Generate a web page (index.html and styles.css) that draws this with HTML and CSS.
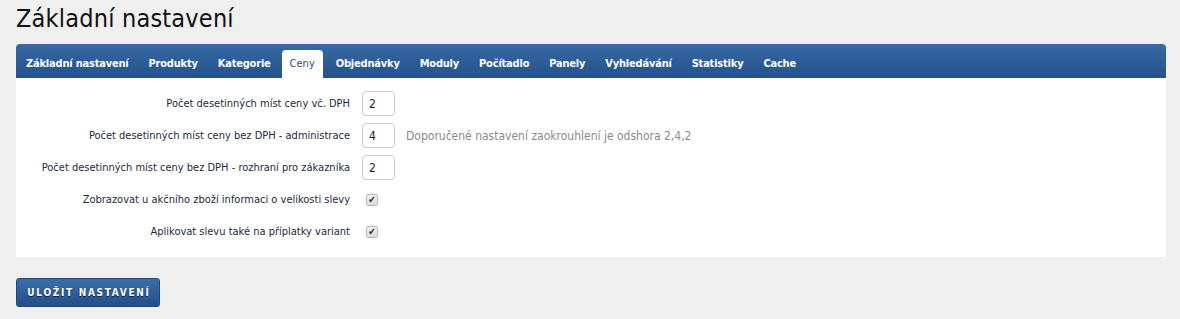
FILE: index.html
```html
<!DOCTYPE html>
<html lang="cs">

<head>
    <meta charset="UTF-8">
    <title>Základní nastavení</title>
    <link rel="stylesheet" href="styles.css">
</head>

<body>
    <h1>Základní nastavení</h1>
    <div class="tabs">
        <ul class="tab-bar">
            <li>Základní nastavení</li>
            <li>Produkty</li>
            <li>Kategorie</li>
            <li class="active">Ceny</li>
            <li>Objednávky</li>
            <li>Moduly</li>
            <li>Počítadlo</li>
            <li>Panely</li>
            <li>Vyhledávání</li>
            <li>Statistiky</li>
            <li>Cache</li>
        </ul>
        <div class="tab-panel">
            <div class="row">
                <label>Počet desetinných míst ceny vč. DPH</label>
                <input type="text" class="num" value="2">
            </div>
            <div class="row">
                <label>Počet desetinných míst ceny bez DPH - administrace</label>
                <input type="text" class="num" value="4">
                <span class="hint">Doporučené nastavení zaokrouhlení je odshora 2,4,2</span>
            </div>
            <div class="row">
                <label>Počet desetinných míst ceny bez DPH - rozhraní pro zákazníka</label>
                <input type="text" class="num" value="2">
            </div>
            <div class="row">
                <label>Zobrazovat u akčního zboží informaci o velikosti slevy</label>
                <span class="check">&#10004;</span>
            </div>
            <div class="row">
                <label>Aplikovat slevu také na příplatky variant</label>
                <span class="check">&#10004;</span>
            </div>
        </div>
    </div>
    <button class="save">Uložit nastavení</button>
</body>

</html>
```
FILE: styles.css
```css
body {
    margin: 0;
    padding: 0 14px 0 16px;
    font-family: "DejaVu Sans Condensed", "DejaVu Sans", sans-serif;
    font-size: 11px;
    color: #1e2a3a;
    background-color: #efefef;
}

h1 {
    margin: 0;
    padding-top: 4px;
    height: 40px;
    font-size: 25px;
    font-weight: normal;
    color: #111;
    letter-spacing: 0.2px;
}

.tabs {
    background-color: #fff;
}

.tab-bar {
    list-style: none;
    margin: 0;
    padding: 6px 0 0 3px;
    height: 28px;
    display: flex;
    gap: 6px;
    background: linear-gradient(#3769a3, #24528b);
    border-radius: 4px 4px 0 0;
}

.tab-bar li {
    padding: 0 7px;
    line-height: 27px;
    color: #fff;
    font-weight: bold;
    letter-spacing: -0.2px;
    white-space: nowrap;
}

.tab-bar li.active {
    margin-left: -2px;
    padding: 0 8px;
    background-color: #fff;
    color: #2a4d7c;
    font-weight: normal;
    letter-spacing: 0;
    border-radius: 4px 4px 0 0;
    line-height: 28px;
}

.tab-panel {
    padding: 13px 0;
}

.row {
    display: flex;
    align-items: center;
    height: 25px;
    margin-bottom: 7px;
}

.row:last-child {
    margin-bottom: 0;
}

.row label {
    width: 334px;
    text-align: right;
    padding-right: 12px;
}

.num {
    width: 33px;
    height: 25px;
    box-sizing: border-box;
    border: 1px solid #ccc;
    border-radius: 4px;
    padding: 0 6px;
    font-family: inherit;
    font-size: 12px;
    color: #222;
}

.hint {
    margin-left: 11px;
    color: #8a8a8a;
    font-size: 12px;
}

.check {
    width: 10px;
    height: 10px;
    margin-left: 4px;
    border: 1px solid #b5b5b5;
    border-radius: 2px;
    background: linear-gradient(#f6f6f6, #dcdcdc);
    font-size: 10px;
    line-height: 10px;
    text-align: center;
    color: #2b2b2b;
}

.save {
    margin-top: 21px;
    width: 144px;
    height: 29px;
    padding: 0 0 0 2px;
    border: 1px solid #1f4a7e;
    border-radius: 3px;
    background: linear-gradient(#3a6ea9, #244f88);
    color: #fff;
    font-family: inherit;
    font-size: 10px;
    font-weight: bold;
    letter-spacing: 1.7px;
    text-transform: uppercase;
    text-shadow: 0 1px 1px #0d2340;
}
```
